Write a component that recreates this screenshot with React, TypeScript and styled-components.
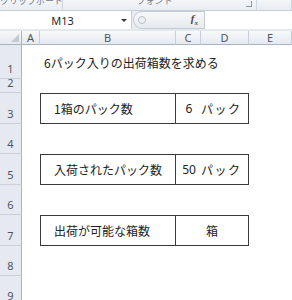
import React from 'react';
import styled, { createGlobalStyle } from 'styled-components';

const GlobalStyle = createGlobalStyle`
  html, body {
    margin: 0;
    padding: 0;
    background: #fff;
  }
  body {
    font-family: 'Noto Sans', 'Noto Sans CJK JP', sans-serif;
    width: 292px;
    height: 300px;
    overflow: hidden;
  }
`;

const Window = styled.div`
  width: 292px;
  height: 300px;
  overflow: hidden;
  display: flex;
  flex-direction: column;
  background: #fff;
`;

// ribbon (only the bottom edge is visible)
const RibbonEdge = styled.div`
  height: 10px;
  flex: none;
  display: flex;
  overflow: hidden;
  background: linear-gradient(#f4f6f9, #e8ecf1);
  border-bottom: 1px solid #c6ced8;
`;

const RibbonGroup = styled.div<{ $w?: number }>`
  ${(p) => (p.$w ? `width: ${p.$w}px; flex: none;` : 'flex: 1;')}
  display: flex;
  align-items: flex-start;
  border-right: 1px solid #d2d8e0;
  overflow: hidden;
`;

const GroupLabel = styled.span`
  flex: 1;
  text-align: center;
  font-family: 'Noto Sans CJK JP', sans-serif;
  font-size: 9px;
  line-height: 10px;
  margin-top: -4px;
  color: #6f7b8a;
  white-space: nowrap;
`;

const Launcher = styled.span`
  flex: none;
  width: 5px;
  height: 5px;
  margin: 1px 4px 0 0;
  border-right: 1px solid #8b96a4;
  border-bottom: 1px solid #8b96a4;
`;

// formula bar
const FormulaBar = styled.div`
  height: 18px;
  flex: none;
  display: flex;
  align-items: stretch;
  background: #e9edf2;
  border-bottom: 2px solid #e3e8ee;
`;

const NameBox = styled.div`
  width: 131px;
  flex: none;
  display: flex;
  align-items: center;
  background: #fff;
  border-right: 1px solid #c8d0da;
`;

const NameText = styled.span`
  flex: 1;
  text-align: center;
  padding-left: 4px;
  font-size: 11px;
  color: #2b2b2b;
`;

const DropArrow = styled.span`
  width: 0;
  height: 0;
  margin-right: 4px;
  border-left: 3px solid transparent;
  border-right: 3px solid transparent;
  border-top: 3px solid #3a3a3a;
`;

const FxArea = styled.div`
  width: 70px;
  flex: none;
  margin-left: 1px;
  display: flex;
  align-items: center;
  justify-content: space-between;
  border: 1px solid #c3cbd5;
  border-right: none;
  border-radius: 9px 0 0 9px;
  background: linear-gradient(#f7f8fa, #e6eaef);
`;

const Grip = styled.span`
  width: 6px;
  height: 6px;
  margin-left: 4px;
  border-radius: 50%;
  border: 1px solid #b9c1cb;
  background: #eef1f4;
`;

const FxLabel = styled.span`
  margin-right: 6px;
  font-family: 'Liberation Serif', serif;
  font-style: italic;
  font-weight: bold;
  font-size: 11px;
  color: #4a4a4a;

  sub {
    font-size: 7px;
  }
`;

const FormulaInput = styled.div`
  flex: 1;
  background: #fff;
  border-left: 1px solid #c3cbd5;
`;

// worksheet
const Sheet = styled.div<{ $rows: string }>`
  flex: 1;
  display: grid;
  grid-template-columns: 22px 18px 136px 25px 48px 1fr;
  grid-template-rows: ${(p) => p.$rows};
  font-family: 'Noto Sans CJK JP', sans-serif;
  color: #222;
`;

const Corner = styled.div`
  position: relative;
  background: linear-gradient(#f6f8fa, #e4e9ef);
  border-right: 1px solid #aab4c0;
  border-bottom: 1px solid #aab4c0;

  &::after {
    content: '';
    position: absolute;
    right: 2px;
    bottom: 2px;
    border-left: 8px solid transparent;
    border-bottom: 8px solid #c3cad3;
  }
`;

const ColHead = styled.div`
  display: flex;
  align-items: center;
  justify-content: center;
  background: linear-gradient(#f7f9fb, #e5eaf0);
  border-right: 1px solid #c7ced7;
  border-bottom: 1px solid #aab4c0;
  font-family: 'Noto Sans', sans-serif;
  font-size: 11px;
  color: #4d5561;
`;

const RowHead = styled.div`
  display: flex;
  align-items: flex-end;
  justify-content: center;
  padding-bottom: 3px;
  box-sizing: border-box;
  background: #e6eaf0;
  border-right: 1px solid #aab4c0;
  border-bottom: 1px solid #c9d0d9;
  font-family: 'Noto Sans', sans-serif;
  font-size: 11px;
  line-height: 13px;
  color: #4d5561;
`;

const Blank = styled.div<{ $span: number }>`
  grid-column: span ${(p) => p.$span};
`;

const TitleCell = styled.div`
  grid-column: span 4;
  display: flex;
  align-items: center;
  padding-left: 4px;
  font-size: 12px;
  white-space: nowrap;
`;

const LabelCell = styled.div`
  display: flex;
  align-items: center;
  padding-left: 13px;
  border: 1px solid #3b3b3b;
  font-size: 12px;
  white-space: nowrap;
`;

const ValueCell = styled.div<{ $center?: boolean }>`
  grid-column: span 2;
  display: flex;
  align-items: center;
  justify-content: ${(p) => (p.$center ? 'center' : 'flex-start')};
  border: 1px solid #3b3b3b;
  border-left: none;
  font-size: 12px;
  white-space: nowrap;
`;

const Num = styled.span`
  width: 26px;
  text-align: center;
  font-family: 'Noto Sans', sans-serif;
`;

const Unit = styled.span`
  margin-left: -1px;
  letter-spacing: 1.5px;
`;

type Row = {
  n: number;
  h: number;
  title?: string;
  label?: string;
  num?: string;
  unit?: string;
};

const rows: Row[] = [
  { n: 1, h: 34, title: '6パック入りの出荷箱数を求める' },
  { n: 2, h: 14 },
  { n: 3, h: 31, label: '1箱のパック数', num: '6', unit: 'パック' },
  { n: 4, h: 30 },
  { n: 5, h: 31, label: '入荷されたパック数', num: '50', unit: 'パック' },
  { n: 6, h: 30 },
  { n: 7, h: 31, label: '出荷が可能な箱数', unit: '箱' },
  { n: 8, h: 30 },
  { n: 9, h: 30 },
];

const columns = ['A', 'B', 'C', 'D', 'E'];

function App() {
  const template = ['14px', ...rows.map((r) => `${r.h}px`)].join(' ');

  return (
    <Window>
      <GlobalStyle />

      {/* ribbon bottom edge */}
      <RibbonEdge>
        <RibbonGroup $w={62}>
          <GroupLabel>クリップボード</GroupLabel>
          <Launcher />
        </RibbonGroup>
        <RibbonGroup $w={193}>
          <GroupLabel>フォント</GroupLabel>
          <Launcher />
        </RibbonGroup>
        <RibbonGroup />
      </RibbonEdge>

      {/* name box + formula bar */}
      <FormulaBar>
        <NameBox>
          <NameText>M13</NameText>
          <DropArrow />
        </NameBox>
        <FxArea>
          <Grip />
          <FxLabel>
            f<sub>x</sub>
          </FxLabel>
        </FxArea>
        <FormulaInput />
      </FormulaBar>

      <Sheet $rows={template}>
        <Corner />
        {columns.map((c) => (
          <ColHead key={c}>{c}</ColHead>
        ))}

        {rows.map((r) => (
          <React.Fragment key={r.n}>
            <RowHead>{r.n}</RowHead>
            {r.title ? (
              <>
                <Blank $span={1} />
                <TitleCell>{r.title}</TitleCell>
              </>
            ) : r.label ? (
              <>
                <Blank $span={1} />
                <LabelCell>{r.label}</LabelCell>
                <ValueCell $center={!r.num}>
                  {r.num && <Num>{r.num}</Num>}
                  {r.num ? <Unit>{r.unit}</Unit> : r.unit}
                </ValueCell>
                <Blank $span={1} />
              </>
            ) : (
              <Blank $span={5} />
            )}
          </React.Fragment>
        ))}
      </Sheet>
    </Window>
  );
}

export default App;
